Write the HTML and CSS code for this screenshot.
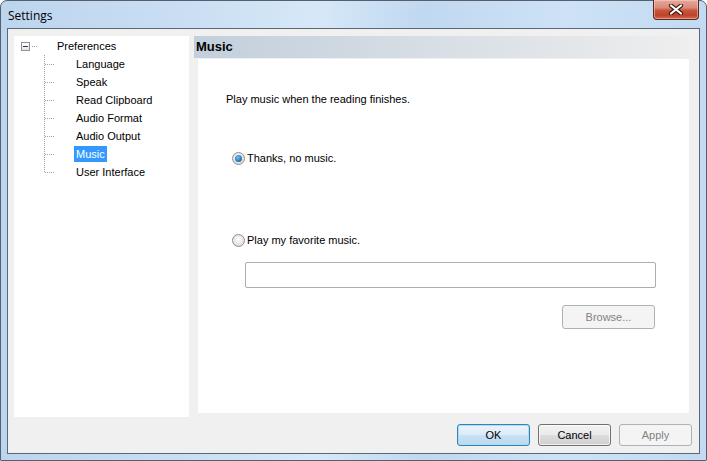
FILE: index.html
```html
<!DOCTYPE html>
<html lang="en">
<head>
  <meta charset="UTF-8" />
  <title>Settings</title>
  <link rel="stylesheet" href="styles.css">
</head>
<body>

  <div class="window">
    <!-- Title bar -->
    <div class="titlebar">
      <span class="title">Settings</span>
      <button class="close" aria-label="Close">
        <svg width="16" height="11" viewBox="0 0 16 11">
          <path d="M3 1.5 L13 9.5 M13 1.5 L3 9.5" stroke="#3a1510" stroke-width="4.2" stroke-linecap="round" fill="none"/>
          <path d="M3 1.5 L13 9.5 M13 1.5 L3 9.5" stroke="#fff" stroke-width="2.2" stroke-linecap="round" fill="none"/>
        </svg>
      </button>
    </div>

    <div class="client">
      <div class="main">

        <!-- Tree -->
        <nav class="tree">
          <div class="root-row">
            <span class="expander"><span></span></span>
            <span class="stub"></span>
            <span class="label">Preferences</span>
          </div>
          <ul class="children">
            <li><span class="label">Language</span></li>
            <li><span class="label">Speak</span></li>
            <li><span class="label">Read Clipboard</span></li>
            <li><span class="label">Audio Format</span></li>
            <li><span class="label">Audio Output</span></li>
            <li><span class="label selected">Music</span></li>
            <li><span class="label">User Interface</span></li>
          </ul>
        </nav>

        <!-- Page -->
        <section class="page">
          <h2 class="page-title">Music</h2>
          <div class="page-body">
            <p class="intro">Play music when the reading finishes.</p>
            <div class="radio first"><span class="dot checked"></span>Thanks, no music.</div>
            <div class="radio second"><span class="dot"></span>Play my favorite music.</div>
            <div class="path-field"></div>
            <div class="browse-row">
              <button class="btn" disabled>Browse...</button>
            </div>
          </div>
        </section>

      </div>

      <div class="actions">
        <button class="btn default">OK</button>
        <button class="btn">Cancel</button>
        <button class="btn" disabled>Apply</button>
      </div>
    </div>
  </div>

</body>
</html>
```

FILE: styles.css
```css
* { margin: 0; padding: 0; box-sizing: border-box; }
body {
  background: #fff;
  font-family: 'Liberation Sans', Arial, sans-serif;
  font-size: 11px;
  color: #000;
}

/* --- Window frame --- */
.window {
  width: 707px;
  height: 461px;
  border: 1px solid #55606c;
  border-radius: 7px 7px 1px 1px;
  padding: 0 6px 6px;
  display: flex;
  flex-direction: column;
  background:
    linear-gradient(to right, #bcd5ee 0%, #c9def3 25%, #d6e8f8 45%, #c0d8f0 60%, #cde2f6 80%, #c2daf2 100%);
}
.titlebar {
  height: 27px;
  display: flex;
  justify-content: space-between;
  align-items: flex-start;
}
.title {
  padding-left: 1px;
  line-height: 29px;
  font-family: 'Open Sans', 'Noto Sans', sans-serif;
  font-size: 12px;
  color: #000;
}
.close {
  width: 46px;
  height: 20px;
  margin: -1px 1px 0 0;
  border: 1px solid #5a2a22;
  border-top: 0;
  border-radius: 0 0 4px 4px;
  background: linear-gradient(#e6a99d 0%, #d98a78 40%, #c9553b 55%, #c0432a 80%, #d46a4c 100%);
  box-shadow: inset 0 0 0 1px rgba(255, 220, 210, 0.45);
  display: flex;
  align-items: center;
  justify-content: center;
  cursor: pointer;
}

/* --- Client area --- */
.client {
  flex: 1;
  border: 1px solid #5b6773;
  background: #f0f0f0;
  display: flex;
  flex-direction: column;
  padding: 7px 10px 7px 6px;
}
.main {
  flex: 1;
  display: flex;
  gap: 5px;
}

/* --- Tree --- */
.tree {
  width: 175px;
  background: #fff;
  padding-top: 1px;
}
.root-row {
  height: 18px;
  display: flex;
  align-items: center;
  padding-left: 7px;
}
.expander {
  width: 9px;
  height: 9px;
  border: 1px solid #919191;
  background: linear-gradient(#fff, #e3e3e3);
  display: flex;
  align-items: center;
  justify-content: center;
  margin-top: 1px;
}
.expander span {
  width: 5px;
  height: 1px;
  background: #2b3f63;
}
.stub {
  width: 5px;
  height: 1px;
  margin-left: 2px;
  background: repeating-linear-gradient(to right, #a0a0a0 0 1px, transparent 1px 2px);
}
.root-row .label { margin-left: 18px; }

.label {
  display: inline-block;
  padding: 0 2px;
  line-height: 16px;
  color: #000;
}
.label.selected {
  background: #3399ff;
  color: #fff;
}

.children {
  list-style: none;
  margin-left: 30px;
  background: repeating-linear-gradient(to bottom, #a0a0a0 0 1px, transparent 1px 2px) left top / 1px calc(100% - 9px) no-repeat;
}
.children li {
  height: 18px;
  display: flex;
  align-items: center;
  padding-left: 30px;
  background: repeating-linear-gradient(to right, #a0a0a0 0 1px, transparent 1px 2px) 1px 9px / 10px 1px no-repeat;
}

/* --- Settings page --- */
.page {
  flex: 1;
  display: flex;
  flex-direction: column;
}
.page-title {
  height: 22px;
  line-height: 22px;
  padding-left: 2px;
  font-size: 13px;
  font-weight: bold;
  background: linear-gradient(to right, #c2cfdc, #eeeeee);
}
.page-body {
  flex: 1;
  margin: 1px 0 4px 4px;
  background: #fff;
  padding-left: 28px;
}
.intro {
  margin-top: 32px;
  line-height: 16px;
}
.radio {
  height: 16px;
  display: flex;
  align-items: center;
  margin-left: 6px;
}
.radio.first { margin-top: 43px; }
.radio.second { margin-top: 66px; }
.dot {
  width: 13px;
  height: 13px;
  border-radius: 50%;
  border: 1px solid #8f8f8f;
  background: radial-gradient(circle at 50% 40%, #fdfdfd, #d4d4d4);
  margin-right: 2px;
  display: flex;
  align-items: center;
  justify-content: center;
}
.dot.checked::after {
  content: '';
  width: 7px;
  height: 7px;
  border-radius: 50%;
  background: radial-gradient(circle at 40% 35%, #6fc3f0, #1f6ea8 70%, #174f7e);
}
.path-field {
  height: 26px;
  margin: 14px 33px 0 19px;
  border: 1px solid #abadb3;
  border-radius: 2px;
  background: #fff;
}
.browse-row {
  display: flex;
  justify-content: flex-end;
  margin: 17px 34px 0 0;
}
.browse-row .btn {
  width: 93px;
  height: 24px;
}

/* --- Buttons --- */
.btn {
  width: 73px;
  height: 22px;
  font-family: 'Liberation Sans', Arial, sans-serif;
  font-size: 11px;
  color: #000;
  border: 1px solid #707070;
  border-radius: 3px;
  background: linear-gradient(#f2f2f2 0%, #ebebeb 49%, #dddddd 50%, #cfcfcf 100%);
  box-shadow: inset 0 0 0 1px rgba(255, 255, 255, 0.7);
  cursor: pointer;
}
.btn.default {
  border-color: #3c7fb1;
  background: linear-gradient(#eaf4fb 0%, #dcecf8 49%, #c9e2f4 50%, #bcd9ef 100%);
  box-shadow: inset 0 0 0 1px #9fe0fb;
}
.btn:disabled {
  border-color: #adb2b5;
  background: #f4f4f4;
  box-shadow: none;
  color: #838383;
  cursor: default;
}
.actions {
  margin: 7px -3px 0 0;
  display: flex;
  justify-content: flex-end;
  gap: 8px;
}
```
